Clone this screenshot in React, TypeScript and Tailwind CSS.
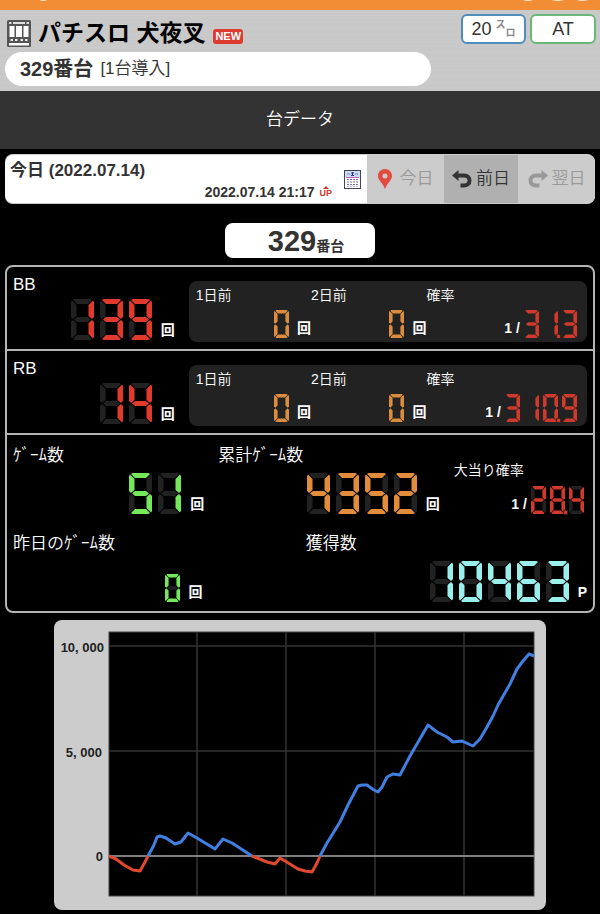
import { useState } from 'react';

// segment order: a (top), b, c, d (bottom), e, f, g (middle)
const SEGMENTS: Record<string, string> = {
  a: 'M3.5 0H19.5L21 1L17 5H6L2 1Z',
  b: 'M22 1.5L23 3V18L21 20L17.5 17V6Z',
  c: 'M22 39.5L23 38V23L21 21L17.5 24V35Z',
  d: 'M3.5 41H19.5L21 40L17 36H6L2 40Z',
  e: 'M1 39.5L0 38V23L2 21L5.5 24V35Z',
  f: 'M1 1.5L0 3V18L2 20L5.5 17V6Z',
  g: 'M6 18H17L20 20.5L17 23H6L3 20.5Z',
};

const DIGITS: Record<string, string> = {
  '0': 'abcdef',
  '1': 'bc',
  '2': 'abdeg',
  '3': 'abcdg',
  '4': 'bcfg',
  '5': 'acdfg',
  '6': 'acdefg',
  '7': 'abc',
  '8': 'abcdefg',
  '9': 'abcdfg',
};

interface LedProps {
  value: string;
  color: string;
  size?: 'sm' | 'lg';
}

function Led({ value, color, size = 'lg' }: LedProps) {
  const cells = value.match(/\d\.?/g) || [];
  return (
    <span
      role="img"
      aria-label={value}
      className={`flex ${color} ${size === 'lg' ? 'gap-[6px]' : 'gap-1'}`}
    >
      {cells.map((cell, i) => (
        <svg
          key={i}
          viewBox="0 0 23 41"
          preserveAspectRatio="none"
          className={`overflow-visible ${size === 'lg' ? 'w-[23px] h-[41px]' : 'w-[15px] h-7'}`}
        >
          {Object.keys(SEGMENTS).map(name => (
            <path
              key={name}
              d={SEGMENTS[name]}
              fill={DIGITS[cell[0]].includes(name) ? 'currentColor' : '#222222'}
            />
          ))}
          {cell[1] && <rect x="21" y="35.5" width="6" height="6" fill="currentColor" stroke="#1c1c1c" strokeWidth="1" />}
        </svg>
      ))}
    </span>
  );
}

function Unit({ children }: { children: string }) {
  return <span className="text-sm leading-5 font-bold">{children}</span>;
}

function Rate({ value }: { value: string }) {
  return (
    <div className="flex items-end justify-end gap-1">
      <span className="flex gap-1 text-sm leading-5 font-bold">
        <span>1</span>
        <span>/</span>
      </span>
      <Led value={value} color="text-[#cf3a2d]" size="sm" />
    </div>
  );
}

interface BonusRowProps {
  name: string;
  count: string;
  history: { label: string; value: string }[];
  rate: string;
}

function BonusRow({ name, count, history, rate }: BonusRowProps) {
  return (
    <section className="flex border-b-2 border-[#b4b4b4]">
      <div className="w-[31%] flex flex-col justify-between pt-[6px] pb-[9px] pl-[6px] pr-[14px]">
        <h3 className="text-[17px] leading-6">{name}</h3>
        <div className="flex items-end justify-end gap-[9px]">
          <Led value={count} color="text-[#df3a2c]" />
          <Unit>回</Unit>
        </div>
      </div>
      <div className="flex-1 grid grid-cols-[23fr_23fr_30fr] mt-[14px] mb-[7px] mr-[6px] pt-1 pb-1 pl-[7px] pr-[10px] rounded-lg bg-[#222222]">
        {history.map(item => (
          <div key={item.label}>
            <div className="text-sm leading-5 font-[350]">{item.label}</div>
            <div className="mt-[5px] flex items-end justify-end gap-2">
              <Led value={item.value} color="text-[#db8c3f]" size="sm" />
              <Unit>回</Unit>
            </div>
          </div>
        ))}
        <div>
          <div className="text-sm leading-5 mb-[5px] font-[350]">確率</div>
          <Rate value={rate} />
        </div>
      </div>
    </section>
  );
}

// coordinates inside the 425 x 264 plot area, zero line at y = 224
const LINES = [
  { color: '#e0492e', points: '0,224 7,227 15,233 24,238 31,239 36,230 39,224' },
  {
    color: '#4180e0',
    points: '39,224 45,213 48,205 51,204 57,206 66,212 72,210 79,201 88,206 106,217 114,207 123,211 143,224',
  },
  { color: '#e0492e', points: '143,224 148,226 158,230 166,232 171,226 181,232 189,237 196,239 203,240 208,231 211,224' },
  {
    color: '#4180e0',
    points:
      '211,224 218,211 231,190 239,173 249,154 253,153 258,153 265,158 269,160 273,155 278,145 284,142 291,143 301,124 319,93 328,100 338,105 344,110 353,109 364,114 371,107 378,95 384,84 389,73 401,52 408,37 414,29 420,22 425,24',
  },
];

function SlumpGraph() {
  return (
    <svg viewBox="0 0 492 290" className="w-full rounded-lg bg-[#cccccc]" role="img" aria-label="スランプグラフ">
      <g fontFamily="Liberation Sans, sans-serif" fontSize="13" fontWeight="bold" fill="#222222" textAnchor="end">
        <text x="50" y="32">10, 000</text>
        <text x="48" y="137">5, 000</text>
        <text x="49" y="241">0</text>
      </g>
      <g transform="translate(55 12)" fill="none">
        <rect width="425" height="264" fill="#000000" stroke="#444444" />
        <path d="M88 0V264M177 0V264M266 0V264M355 0V264M0 14H425M0 119H425" stroke="#333333" strokeWidth="1.5" />
        <path d="M0 224H425" stroke="#aaaaaa" strokeWidth="1.5" />
        {LINES.map((line, i) => (
          <polyline key={i} points={line.points} stroke={line.color} strokeWidth="3" strokeLinejoin="round" />
        ))}
      </g>
    </svg>
  );
}

function ReelIcon() {
  return (
    <svg viewBox="0 0 24 27" className="w-6 h-[27px]">
      <rect width="24" height="27" rx="1.500" fill="#555555" />
      <path d="M2 2H4.500V4H2ZM6 2H18V4H6ZM19.500 2H22V4H19.500Z" fill="#dddddd" />
      <path d="M2.500 6H7.500V17H2.500ZM9 6H15V17H9ZM16.500 6H21.500V17H16.500Z" fill="#ffffff" />
      <path d="M3.500 19H6V21H3.500ZM8 19H10.500V21H8ZM13.500 19H16V21H13.500ZM18 19H20.500V21H18Z" fill="#eeeeee" />
      <path d="M2 23H22V25.500H2Z" fill="#ffffff" />
    </svg>
  );
}

function CalendarIcon() {
  return (
    <svg viewBox="0 0 17 19" className="w-[17px] h-[19px]">
      <rect x=".5" y=".5" width="16" height="18" fill="#ffffff" stroke="#444455" />
      <rect x="1" y="1" width="15" height="6" fill="#c8dcf4" />
      <path d="M3 4H6M11 4H14" stroke="#8080c0" />
      <path d="M7 3H10M8.500 2V6M7 5.500H10" stroke="#3030a0" />
      <path d="M2 7.500H15" stroke="#d060c0" />
      <path d="M4 9V17M7 9V17M10 9V17M13 9V17" stroke="#5040a0" strokeWidth="1.500" strokeDasharray="1 1.500" />
    </svg>
  );
}

function TurnIcon({ flip = false }: { flip?: boolean }) {
  return (
    <svg viewBox="0 0 20 18" className={`w-5 h-[18px] ${flip ? '-scale-x-100' : ''}`} fill="none">
      <path d="M0 5.500L6.500 0V11Z" fill="currentColor" />
      <path d="M6 5.500H12C16 5.500 17.500 8 17.500 10.500C17.500 14 15 15.500 12 15.500H8.500" stroke="currentColor" strokeWidth="4" />
    </svg>
  );
}

export default function App() {
  const [day, setDay] = useState(0);

  return (
    <div className="min-h-screen bg-black text-white font-['Liberation_Sans','Noto_Sans_CJK_JP',sans-serif]">
      <div className="h-[10px] bg-[#f18d35] overflow-hidden">
        <svg viewBox="0 0 600 10" className="w-full h-[10px]" fill="none" stroke="#fbe6d2" strokeWidth="2">
          <path d="M40 -1Q43 1 47 -1M523 -1Q528 1 533 -1M552 -1Q558 1 564 -1M577 -1Q582 1 588 -1" />
        </svg>
      </div>

      <header className="flex justify-between pl-[5px] pr-1 bg-[repeating-linear-gradient(#c9c9c9_0px,#c9c9c9_3px,#c7c7c7_4px,#cbcbcb_6px)]">
        <div className="w-[72%] pb-[5px]">
          <div className="flex items-center h-[42px] pt-1 pl-[2px]">
            <ReelIcon />
            <h1 className="ml-[7px] text-[23px] leading-8 font-bold text-black">パチスロ 犬夜叉</h1>
            <span className="ml-2 mt-[6px] px-[2px] rounded-[3px] bg-[#de3b30] text-[11px] leading-[15px] font-bold">NEW</span>
          </div>
          <div className="flex items-center h-[34px] pl-[15px] gap-[7px] rounded-full bg-white text-[#333333]">
            <span className="text-xl leading-6 font-bold">329番台</span>
            <span className="text-[17px] leading-6 font-[350]">[1台導入]</span>
          </div>
        </div>
        <div className="flex gap-1 pt-1 text-[#333333] text-lg">
          <span className="flex items-center justify-center gap-1 w-[65px] h-[30px] rounded-md border-2 border-[#4f8dbc] bg-white">
            20
            <span className="flex items-center text-[10px] leading-3 font-bold text-[#888888]">
              <span className="pb-2">ス</span>
              <span className="pt-2">ロ</span>
            </span>
          </span>
          <span className="flex items-center justify-center w-[66px] h-[30px] rounded-md border-2 border-[#6ab878] bg-white">AT</span>
        </div>
      </header>

      <h2 className="h-[58px] flex items-center justify-center bg-[#333333] text-[17px] font-[350]">台データ</h2>

      <nav className="flex mt-[5px] mx-[5px] h-[50px] rounded-lg overflow-hidden border-y border-[#cccccc] bg-white text-[#333333]">
        <div className="flex-1 flex flex-col justify-between pl-[5px] pt-1 pb-[2px] font-bold">
          <div className="text-[17px] leading-6">今日 (2022.07.14)</div>
          <div className="flex justify-end items-center gap-[5px] text-sm leading-[18px]">
            2022.07.14 21:17
            <span className="flex flex-col items-center text-[#c93a2c]">
              <svg viewBox="0 0 6 3" className="w-[6px] h-[3px]" fill="currentColor">
                <path d="M3 0L6 3H0Z" />
              </svg>
              <span className="text-[9px] leading-[9px]">UP</span>
            </span>
          </div>
        </div>
        <button type="button" aria-label="カレンダー" className="pl-3 pr-[6px]">
          <CalendarIcon />
        </button>
        <button
          type="button"
          disabled={day === 0}
          onClick={() => setDay(0)}
          className="w-[77px] flex items-center justify-center gap-2 bg-[#cccccc] text-[17px] font-[350] disabled:text-[#999999]"
        >
          <svg viewBox="0 0 14 20" className="w-[14px] h-5" fill="#e24b40">
            <path
              fillRule="evenodd"
              d="M7 0C3 0 0 3 0 7C0 11 4 13 7 20C10 13 14 11 14 7C14 3 11 0 7 0ZM7 4.500A2.500 2.500 0 1 1 7 9.500A2.500 2.500 0 1 1 7 4.500Z"
            />
          </svg>
          今日
        </button>
        <button
          type="button"
          onClick={() => setDay(day - 1)}
          className="w-[74px] flex items-center justify-center gap-1 bg-[#b0b0b0] text-[17px] font-[350]"
        >
          <TurnIcon />
          前日
        </button>
        <button
          type="button"
          disabled={day === 0}
          onClick={() => setDay(day + 1)}
          className="w-[77px] flex items-center justify-center gap-1 bg-[#cccccc] text-[17px] font-[350] disabled:text-[#999999]"
        >
          <TurnIcon flip />
          翌日
        </button>
      </nav>

      <main>
        <div className="w-1/4 h-[35px] mx-auto mt-[19px] mb-[7px] pl-3 flex items-baseline justify-center rounded-lg bg-white text-[#333333] font-bold">
          <span className="text-[29px] leading-9">329</span>
          <span className="text-sm">番台</span>
        </div>

        <div className="mx-[5px] border-2 border-[#b4b4b4] rounded-lg">
          <BonusRow
            name="BB"
            count="139"
            history={[
              { label: '1日前', value: '0' },
              { label: '2日前', value: '0' },
            ]}
            rate="31.3"
          />
          <BonusRow
            name="RB"
            count="14"
            history={[
              { label: '1日前', value: '0' },
              { label: '2日前', value: '0' },
            ]}
            rate="310.9"
          />

          <section className="pt-[9px] pb-[9px] pl-[6px] text-[17px] leading-6">
            <div className="grid grid-cols-[191fr_221fr_130fr] gap-x-[14px] pr-[9px]">
              <div>
                <h3 className="font-[350]">ｹﾞｰﾑ数</h3>
                <div className="mt-[5px] flex items-end justify-end gap-[9px]">
                  <Led value="51" color="text-[#74e85a]" />
                  <Unit>回</Unit>
                </div>
              </div>
              <div>
                <h3 className="font-[350]">累計ｹﾞｰﾑ数</h3>
                <div className="mt-[5px] flex items-end justify-end gap-[9px]">
                  <Led value="4352" color="text-[#e18d3b]" />
                  <Unit>回</Unit>
                </div>
              </div>
              <div className="flex flex-col justify-between pt-4">
                <h3 className="text-sm leading-5 font-[350]">大当り確率</h3>
                <Rate value="28.4" />
              </div>
            </div>
            <div className="mt-[18px] pr-[6px] flex justify-between">
              <div className="w-[33%] flex flex-col justify-between">
                <h3 className="font-[350]">昨日のｹﾞｰﾑ数</h3>
                <div className="flex items-end justify-end gap-2">
                  <Led value="0" color="text-[#74e85a]" size="sm" />
                  <Unit>回</Unit>
                </div>
              </div>
              <div className="w-[49%]">
                <h3 className="font-[350]">獲得数</h3>
                <div className="mt-[5px] flex items-end justify-end gap-[9px]">
                  <Led value="10463" color="text-[#98efec]" />
                  <Unit>P</Unit>
                </div>
              </div>
            </div>
          </section>
        </div>

        <div className="mx-[9%] mt-[7px] pb-1">
          <SlumpGraph />
        </div>
      </main>
    </div>
  );
}
